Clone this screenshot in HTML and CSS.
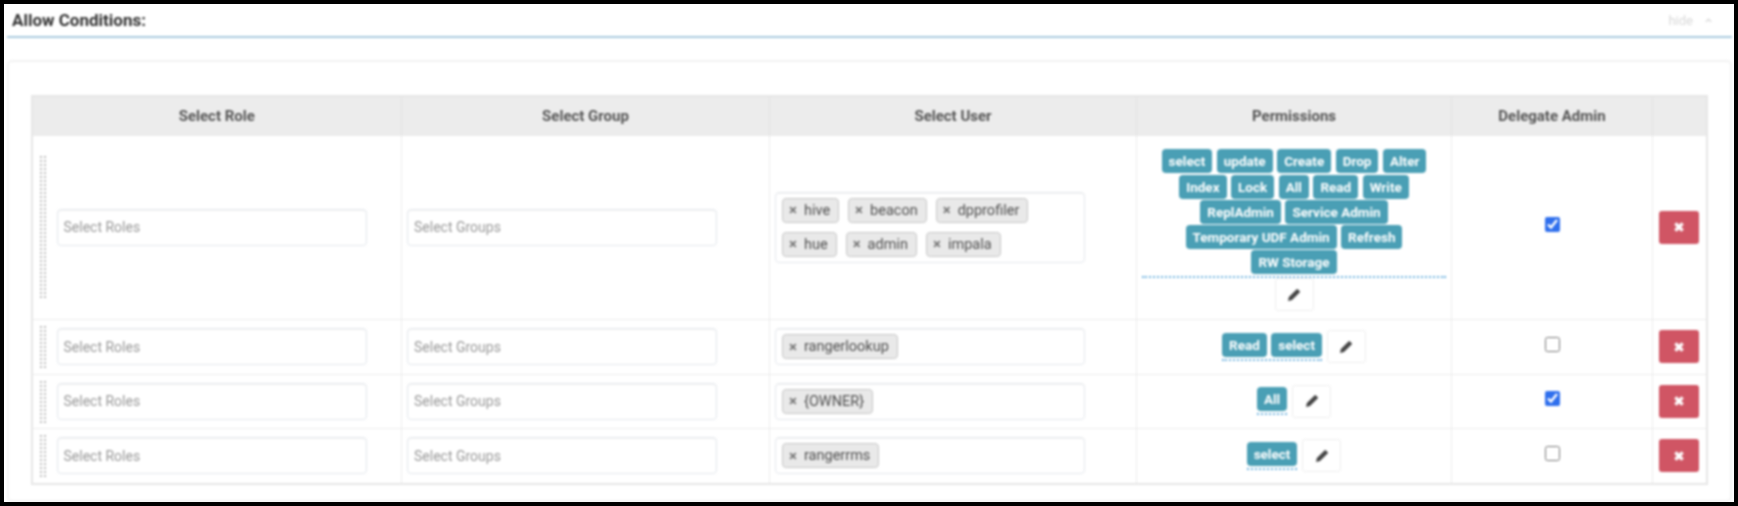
FILE: index.html
```html
<!DOCTYPE html>
<html lang="en">
<head>
<meta charset="utf-8">
<title>Allow Conditions</title>
<link rel="stylesheet" href="styles.css">
</head>
<body>
<div class="frame">
  <div class="section-head">
    <span class="section-title">Allow Conditions:</span>
    <span class="section-toggle">hide <svg class="caret" viewBox="0 0 8 5"><path d="M1 4l3-3 3 3"/></svg></span>
  </div>
  <div class="panel">
    <table class="grid">
      <colgroup><col class="c-role"><col class="c-group"><col class="c-user"><col class="c-perm"><col class="c-admin"><col class="c-del"></colgroup>
      <thead>
        <tr><th>Select Role</th><th>Select Group</th><th>Select User</th><th>Permissions</th><th>Delegate Admin</th><th></th></tr>
      </thead>
      <tbody>
        <tr class="row-tall">
          <td><div class="role-cell"><span class="handle handle-tall"></span><input class="field" placeholder="Select Roles"></div></td>
          <td><div class="group-cell"><input class="field" placeholder="Select Groups"></div></td>
          <td><div class="user-box">
            <span class="chip"><i>×</i>hive</span><span class="chip"><i>×</i>beacon</span><span class="chip"><i>×</i>dpprofiler</span>
            <span class="chip"><i>×</i>hue</span><span class="chip"><i>×</i>admin</span><span class="chip"><i>×</i>impala</span>
          </div></td>
          <td>
            <div class="perm-stack">
              <div class="perm-lines">
                <div class="perm-line"><span class="perm">select</span><span class="perm">update</span><span class="perm">Create</span><span class="perm">Drop</span><span class="perm">Alter</span></div>
                <div class="perm-line"><span class="perm">Index</span><span class="perm">Lock</span><span class="perm">All</span><span class="perm">Read</span><span class="perm">Write</span></div>
                <div class="perm-line"><span class="perm">ReplAdmin</span><span class="perm">Service Admin</span></div>
                <div class="perm-line"><span class="perm">Temporary UDF Admin</span><span class="perm">Refresh</span></div>
                <div class="perm-line"><span class="perm">RW Storage</span></div>
              </div>
              <button class="edit"><svg viewBox="0 0 16 16"><path d="M2 14l.9-4 7.6-7.6a1 1 0 0 1 1.4 0l1.7 1.7a1 1 0 0 1 0 1.4L6 13.1z"/></svg></button>
            </div>
          </td>
          <td class="center"><input class="check" type="checkbox" checked></td>
          <td class="center"><button class="del"><svg viewBox="0 0 10 10"><path d="M2 2l6 6M8 2l-6 6"/></svg></button></td>
        </tr>
        <tr class="row-a">
          <td><div class="role-cell"><span class="handle"></span><input class="field" placeholder="Select Roles"></div></td>
          <td><div class="group-cell"><input class="field" placeholder="Select Groups"></div></td>
          <td><div class="user-box"><span class="chip"><i>×</i>rangerlookup</span></div></td>
          <td><div class="perm-inline"><div class="perm-under"><span class="perm">Read</span><span class="perm">select</span></div><button class="edit"><svg viewBox="0 0 16 16"><path d="M2 14l.9-4 7.6-7.6a1 1 0 0 1 1.4 0l1.7 1.7a1 1 0 0 1 0 1.4L6 13.1z"/></svg></button></div></td>
          <td class="center"><input class="check" type="checkbox"></td>
          <td class="center"><button class="del"><svg viewBox="0 0 10 10"><path d="M2 2l6 6M8 2l-6 6"/></svg></button></td>
        </tr>
        <tr class="row-b">
          <td><div class="role-cell"><span class="handle"></span><input class="field" placeholder="Select Roles"></div></td>
          <td><div class="group-cell"><input class="field" placeholder="Select Groups"></div></td>
          <td><div class="user-box"><span class="chip"><i>×</i>{OWNER}</span></div></td>
          <td><div class="perm-inline"><div class="perm-under"><span class="perm">All</span></div><button class="edit"><svg viewBox="0 0 16 16"><path d="M2 14l.9-4 7.6-7.6a1 1 0 0 1 1.4 0l1.7 1.7a1 1 0 0 1 0 1.4L6 13.1z"/></svg></button></div></td>
          <td class="center"><input class="check" type="checkbox" checked></td>
          <td class="center"><button class="del"><svg viewBox="0 0 10 10"><path d="M2 2l6 6M8 2l-6 6"/></svg></button></td>
        </tr>
        <tr class="row-c">
          <td><div class="role-cell"><span class="handle"></span><input class="field" placeholder="Select Roles"></div></td>
          <td><div class="group-cell"><input class="field" placeholder="Select Groups"></div></td>
          <td><div class="user-box"><span class="chip"><i>×</i>rangerrms</span></div></td>
          <td><div class="perm-inline"><div class="perm-under"><span class="perm">select</span></div><button class="edit"><svg viewBox="0 0 16 16"><path d="M2 14l.9-4 7.6-7.6a1 1 0 0 1 1.4 0l1.7 1.7a1 1 0 0 1 0 1.4L6 13.1z"/></svg></button></div></td>
          <td class="center"><input class="check" type="checkbox"></td>
          <td class="center"><button class="del"><svg viewBox="0 0 10 10"><path d="M2 2l6 6M8 2l-6 6"/></svg></button></td>
        </tr>
      </tbody>
    </table>
  </div>
</div>
</body>
</html>
```
FILE: styles.css
```css
* { box-sizing: border-box; }
html, body { height: 100%; }
body {
  margin: 0;
  background: #000;
  padding: 4px;
  overflow: hidden;
  font-family: Roboto, "Liberation Sans", sans-serif;
}
.frame {
  height: 498px;
  background: #fff;
  padding: 0 2px 0 3px;
  display: flex;
  flex-direction: column;
  overflow: hidden;
}
.section-head {
  height: 34px;
  flex: none;
  display: flex;
  align-items: center;
  justify-content: space-between;
  border-bottom: 2px solid #a9cbdf;
  padding: 2px 20px 2px 5px;
  filter: blur(0.85px);
}
.section-title { font-size: 17px; font-weight: 700; color: #333; }
.section-toggle { font-size: 13px; color: #d8d8d8; display: flex; align-items: center; gap: 12px; }
.caret { width: 7px; height: 5px; fill: none; stroke: #ccc; stroke-width: 1.2; }
.panel {
  margin-top: 22px;
  flex: 1;
  border: 2px solid #f2f2f2;
  border-radius: 5px;
  padding: 33px 0 0 21.5px;
  filter: blur(0.85px);
}
.grid {
  width: 1675px;
  table-layout: fixed;
  border-collapse: collapse;
  border: 2px solid #e6e6e6;
}
.c-role { width: 370px; }
.c-group { width: 368px; }
.c-user { width: 367px; }
.c-perm { width: 315px; }
.c-admin { width: 201px; }
.c-del { width: 54px; }
th {
  height: 39px;
  background: #ececec;
  border-left: 1px solid #e2e2e2;
  font-size: 15px;
  font-weight: 700;
  color: #555;
  text-align: center;
  padding: 0;
}
td {
  border: 1px solid #ececec;
  padding: 0;
  vertical-align: middle;
}
.row-tall td { height: 184px; }
.row-a td { height: 55px; }
.row-b td { height: 54px; }
.row-c td { height: 56px; }
.center { text-align: center; }
.role-cell { display: flex; align-items: center; gap: 10px; padding-left: 6px; }
.group-cell { padding-left: 5px; }
.handle {
  flex: none;
  width: 8px;
  height: 43px;
  background-image: radial-gradient(circle at 2px 2px, #bdbdbd 1.3px, transparent 1.4px);
  background-size: 4px 4px;
}
.handle-tall { height: 144px; }
.field {
  display: block;
  width: 310px;
  height: 37px;
  border: 1.5px solid #e3e7ec;
  border-radius: 4px;
  padding: 0 6px;
  font: 14px Roboto, "Liberation Sans", sans-serif;
  color: #555;
  background: #fff;
  box-shadow: inset 0 1px 1px rgba(0, 0, 0, .05);
  outline: none;
}
.field::placeholder { color: #999; opacity: 1; }
.user-box {
  width: 310px;
  margin-left: 5px;
  min-height: 37px;
  border: 1.5px solid #e3e7ec;
  border-radius: 4px;
  padding: 5px 0 0 6px;
  display: flex;
  flex-wrap: wrap;
  gap: 0 9px;
  box-shadow: inset 0 1px 1px rgba(0, 0, 0, .05);
}
.row-tall .user-box { height: 71px; padding-right: 50px; }
.chip {
  height: 25px;
  margin-bottom: 9px;
  display: inline-flex;
  align-items: center;
  background: #e9e9e9;
  border: 1px solid #c8c8c8;
  border-radius: 4px;
  padding: 0 8px 0 6px;
  font-size: 14.5px;
  color: #505050;
}
.row-a .chip, .row-b .chip, .row-c .chip { margin-bottom: 0; }
.chip i { font-style: normal; color: #777; font-size: 15px; margin-right: 7px; font-weight: 700; }
.perm-stack { display: flex; flex-direction: column; align-items: center; padding: 6.5px 5px 0; }
.perm-lines { width: 100%; border-bottom: 2px dotted #6fb3e0; padding-bottom: 2px; }
.perm-line { display: flex; justify-content: center; gap: 4.5px; margin-bottom: 1.25px; }
.perm-line:last-child { margin-bottom: 0; }
.perm {
  height: 24px;
  display: inline-flex;
  align-items: center;
  background: #4a9fb5;
  color: #fff;
  font-size: 13.5px;
  font-weight: 700;
  border-radius: 4px;
  padding: 0 7px;
}
.perm-inline { display: flex; justify-content: center; align-items: center; gap: 5px; }
.perm-under { display: flex; gap: 4.5px; padding-bottom: 2px; border-bottom: 2px dotted #6fb3e0; }
.edit {
  width: 39px;
  height: 33px;
  padding: 0;
  background: #fff;
  border: 1px solid #eee;
  border-radius: 3px;
  display: flex;
  align-items: center;
  justify-content: center;
}
.edit svg { width: 16px; height: 16px; fill: #444; }
.check { width: 15px; height: 15px; margin: 0 0 5px; accent-color: #2f6fed; vertical-align: middle; }
.del {
  width: 40px;
  height: 33px;
  padding: 0;
  background: #d05564;
  border: 0;
  border-radius: 3px;
  display: inline-flex;
  align-items: center;
  justify-content: center;
  vertical-align: middle;
}
.del svg { width: 12px; height: 12px; fill: none; stroke: #fff; stroke-width: 2.8; }
```
